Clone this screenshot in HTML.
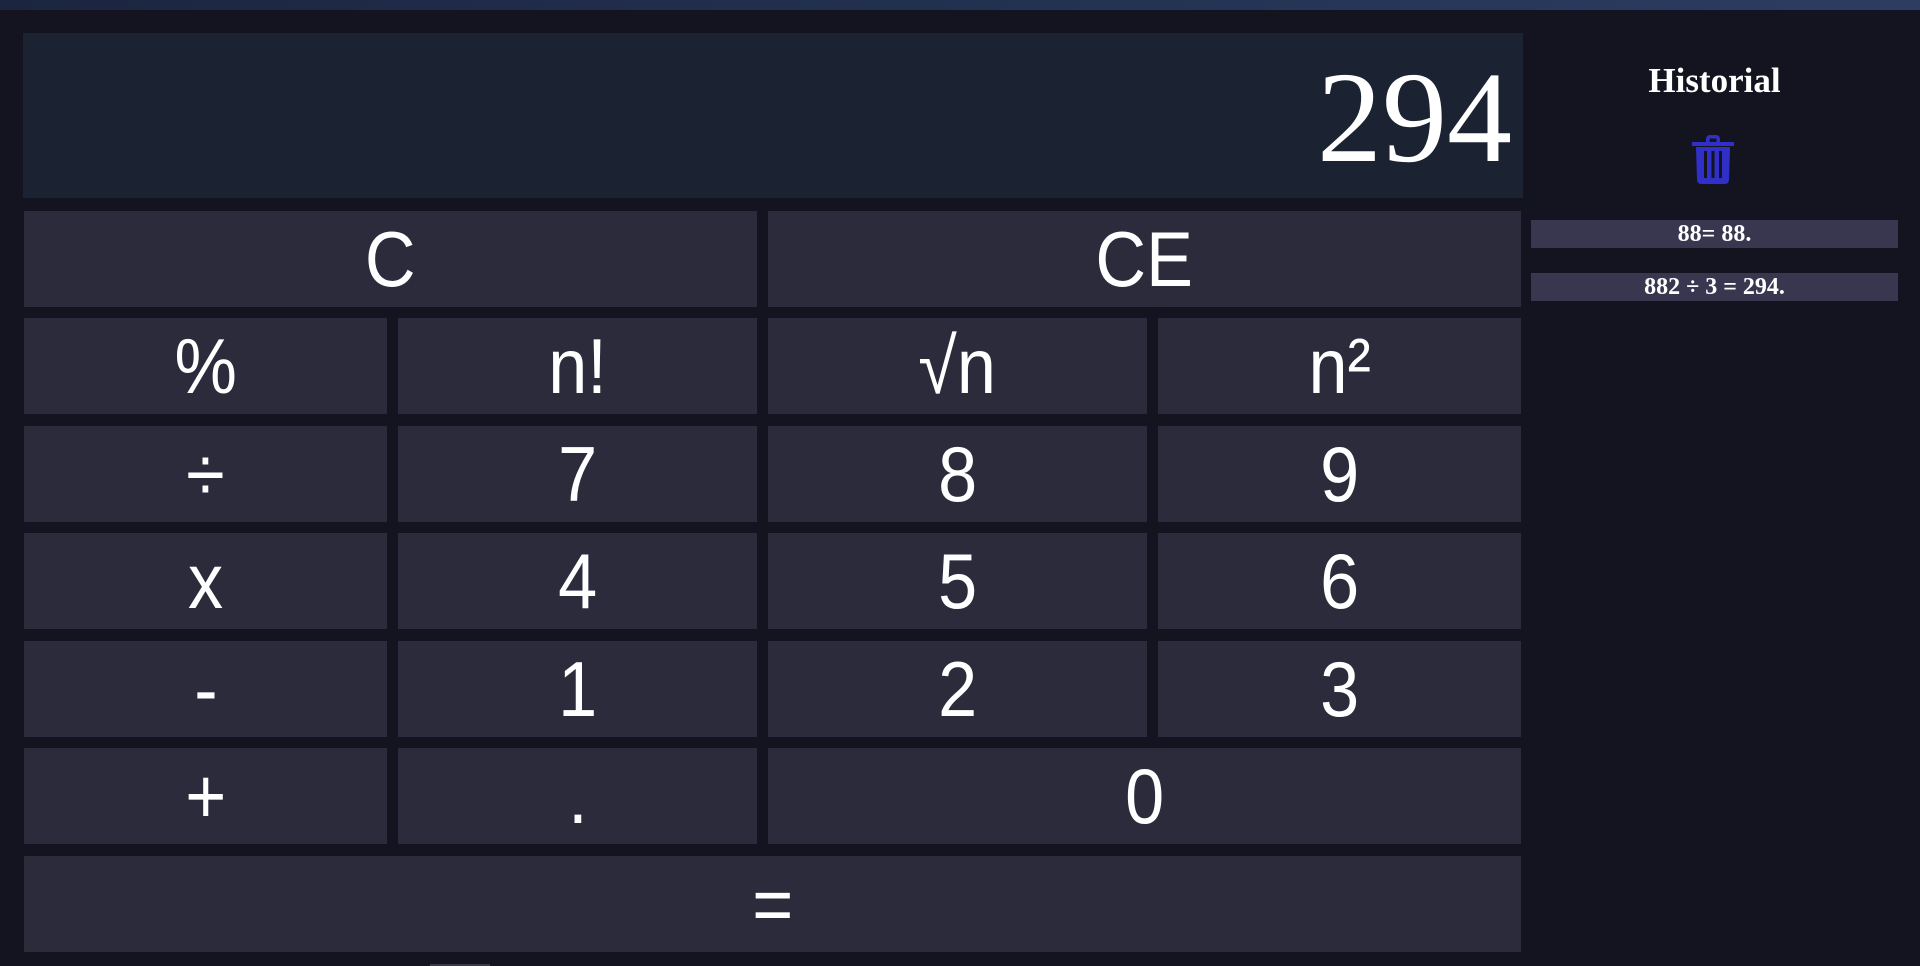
<!DOCTYPE html>
<html><head><meta charset="utf-8"><style>
*{margin:0;padding:0;box-sizing:border-box}
body{width:1920px;height:966px;background:#13141f;position:relative;overflow:hidden;font-family:"Liberation Sans",sans-serif}
.top{position:absolute;left:0;top:0;width:1920px;height:10px;background:linear-gradient(90deg,#1b2540,#243354 60%,#2d3d62)}
.disp{position:absolute;left:23px;top:33px;width:1500px;height:165px;background:#1b2333;color:#fff;font-family:"Liberation Serif",serif;font-size:130px;text-align:right;padding-right:11px;line-height:170px}
.b{position:absolute;background:#2c2b3c;color:#fff;font-size:78px;display:flex;align-items:center;justify-content:center;height:96px}
.b span{display:inline-block;transform:scaleX(0.9)}
.h{position:absolute;left:1531px;width:367px;text-align:center;color:#fff;font-family:"Liberation Serif",serif;font-weight:bold}
.it{background:#393750;height:28px;font-size:24px;line-height:28px}
</style></head><body>
<div class="top"></div>
<div class="disp">294</div>
<div class="b" style="left:24px;top:211px;width:733px"><span>C</span></div>
<div class="b" style="left:768px;top:211px;width:753px"><span>CE</span></div>
<div class="b" style="left:24px;top:318px;width:363px"><span>%</span></div>
<div class="b" style="left:398px;top:318px;width:359px"><span>n!</span></div>
<div class="b" style="left:768px;top:318px;width:379px"><span>√n</span></div>
<div class="b" style="left:1158px;top:318px;width:363px"><span>n²</span></div>
<div class="b" style="left:24px;top:426px;width:363px"><span>÷</span></div>
<div class="b" style="left:398px;top:426px;width:359px"><span>7</span></div>
<div class="b" style="left:768px;top:426px;width:379px"><span>8</span></div>
<div class="b" style="left:1158px;top:426px;width:363px"><span>9</span></div>
<div class="b" style="left:24px;top:533px;width:363px"><span>x</span></div>
<div class="b" style="left:398px;top:533px;width:359px"><span>4</span></div>
<div class="b" style="left:768px;top:533px;width:379px"><span>5</span></div>
<div class="b" style="left:1158px;top:533px;width:363px"><span>6</span></div>
<div class="b" style="left:24px;top:641px;width:363px"><span>-</span></div>
<div class="b" style="left:398px;top:641px;width:359px"><span>1</span></div>
<div class="b" style="left:768px;top:641px;width:379px"><span>2</span></div>
<div class="b" style="left:1158px;top:641px;width:363px"><span>3</span></div>
<div class="b" style="left:24px;top:748px;width:363px"><span>+</span></div>
<div class="b" style="left:398px;top:748px;width:359px"><span>.</span></div>
<div class="b" style="left:768px;top:748px;width:753px"><span>0</span></div>
<div class="b" style="left:24px;top:856px;width:1497px"><span>=</span></div>
<div style="position:absolute;left:430px;top:964px;width:60px;height:2px;background:#3a3a48"></div>
<div class="h" style="top:61px;font-size:35px">Historial</div>
<svg style="position:absolute;left:1692px;top:135px" width="42" height="49" viewBox="0 0 42 49">
<path d="M14 7V4a4 4 0 0 1 4-4h6a4 4 0 0 1 4 4v3h14v4H0V7zM17.5 3.5v3.5h7V3.5z" fill="#3030c8"/>
<path d="M4 12h34l-1 33a4 4 0 0 1-4 4H9a4 4 0 0 1-4-4z" fill="#3030c8"/>
<rect x="12" y="16" width="3" height="27" fill="#13141f"/><rect x="19.5" y="16" width="3" height="27" fill="#13141f"/><rect x="27" y="16" width="3" height="27" fill="#13141f"/>
</svg>
<div class="h it" style="top:220px">88= 88.</div>
<div class="h it" style="top:273px">882 ÷ 3 = 294.</div>
</body></html>
